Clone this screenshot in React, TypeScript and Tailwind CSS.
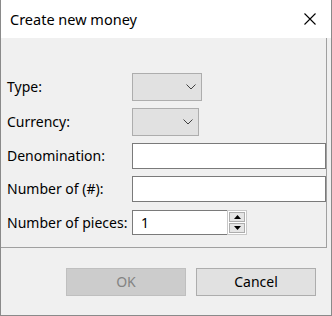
import { ReactNode } from "react";

const Label = ({ children }: { children: ReactNode }) => (
  <div className="w-[125px] shrink-0 whitespace-nowrap text-[14px] text-black leading-none">{children}</div>
);

const Combo = ({ w }: { w: string }) => (
  <div className={`${w} h-[28px] bg-[#e1e1e1] border border-[#adadad] flex items-center justify-end pr-[5px]`}>
    <svg width="10" height="6" viewBox="0 0 10 6" className="text-[#404040]">
      <path d="M0.5 0.5 L5 5 L9.5 0.5" fill="none" stroke="currentColor" strokeWidth="1" />
    </svg>
  </div>
);

const Chevron = ({ up }: { up?: boolean }) => (
  <svg width="7" height="4" viewBox="0 0 7 4">
    <path d={up ? "M0 4 L3.5 0 L7 4 Z" : "M0 0 L3.5 4 L7 0 Z"} fill="#000" />
  </svg>
);

export default function App() {
  return (
    <div
      className="w-[332px] h-[316px] bg-[#f0f0f0] border-l border-r border-b border-[#8a8a8a] flex flex-col overflow-hidden"
      style={{ fontFamily: '"Noto Sans", "Open Sans", sans-serif' }}
    >
      <div className="h-[38px] shrink-0 bg-white flex items-center justify-between pl-[9px] pr-[15px]">
        <span className="text-[14.5px] text-black leading-none">Create new money</span>
        <svg width="12" height="12" viewBox="0 0 12 12">
          <path d="M0.5 0.5 L11.5 11.5 M11.5 0.5 L0.5 11.5" stroke="#000" strokeWidth="1.1" />
        </svg>
      </div>

      <div className="w-[326px] h-[210px] shrink-0 border-r border-b border-[#a0a0a0] pl-[6px] pt-[35px] flex flex-col">
        <div className="flex items-center h-[28px]">
          <Label>Type:</Label>
          <Combo w="w-[70px]" />
        </div>
        <div className="flex items-center h-[28px] mt-[7px]">
          <Label>Currency:</Label>
          <Combo w="w-[67px]" />
        </div>
        <div className="flex items-center h-[26px] mt-[7px]">
          <Label>Denomination:</Label>
          <div className="w-[194px] h-[26px] bg-white border border-[#7a7a7a]" />
        </div>
        <div className="flex items-center h-[26px] mt-[7px]">
          <Label>Number of (#):</Label>
          <div className="w-[194px] h-[26px] bg-white border border-[#7a7a7a]" />
        </div>
        <div className="flex items-center h-[25px] mt-[8px]">
          <Label>Number of pieces:</Label>
          <div className="flex h-[25px]">
            <div className="w-[95px] h-[25px] bg-white border border-r-0 border-[#7a7a7a] flex items-center pl-[8px] text-[14px] leading-none">
              1
            </div>
            <div className="w-[20px] h-[25px] bg-white border border-[#c8c8c8] p-px flex flex-col gap-px">
              <div className="flex-1 bg-[#e5e5e5] border border-[#adadad] flex items-center justify-center">
                <Chevron up />
              </div>
              <div className="flex-1 bg-[#e5e5e5] border border-[#adadad] flex items-center justify-center">
                <Chevron />
              </div>
            </div>
          </div>
        </div>
      </div>

      <div className="flex gap-[10px] pl-[65px] pt-[20px]">
        <div className="w-[120px] h-[28px] bg-[#cccccc] border border-[#bfbfbf] flex items-center justify-center text-[14px] text-[#838383] leading-none">
          OK
        </div>
        <div className="w-[120px] h-[28px] bg-[#e1e1e1] border border-[#adadad] flex items-center justify-center text-[14px] text-black leading-none">
          Cancel
        </div>
      </div>
    </div>
  );
}
